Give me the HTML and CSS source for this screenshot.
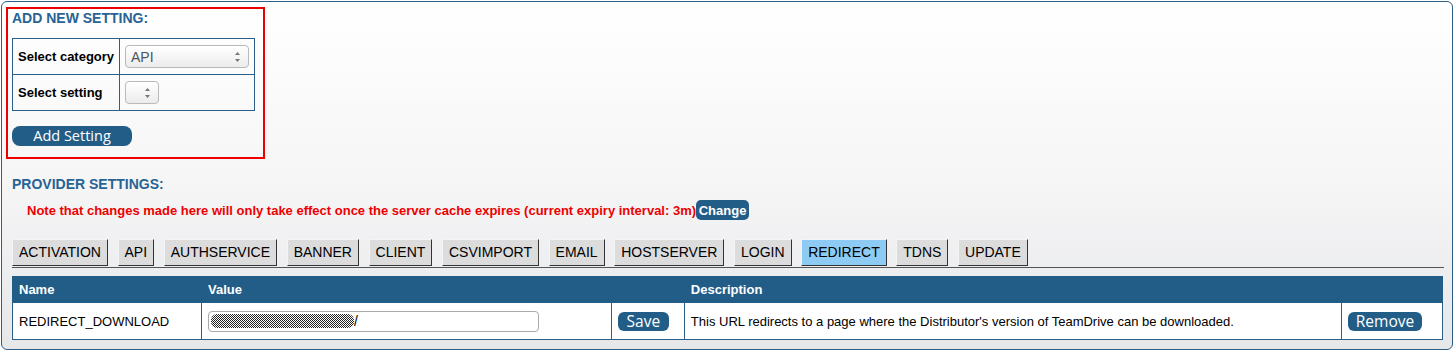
FILE: index.html
```html
<!DOCTYPE html>
<html lang="en">
<head>
  <meta charset="UTF-8" />
  <title>Provider Settings</title>
  <link rel="stylesheet" href="styles.css">
</head>
<body>

  <div class="panel">

    <div class="add-box">
      <h3 class="section-title">ADD NEW SETTING:</h3>
      <table class="select-table">
        <tr>
          <th>Select category</th>
          <td>
            <div class="select select-wide">
              <span>API</span>
              <svg class="arrows" width="7" height="12" viewBox="0 0 7 12"><path d="M3.5 1 L6 4 L1 4 Z M1 8 L6 8 L3.5 11 Z" fill="#777"/></svg>
            </div>
          </td>
        </tr>
        <tr>
          <th>Select setting</th>
          <td>
            <div class="select select-small">
              <span></span>
              <svg class="arrows" width="7" height="12" viewBox="0 0 7 12"><path d="M3.5 1 L6 4 L1 4 Z M1 8 L6 8 L3.5 11 Z" fill="#777"/></svg>
            </div>
          </td>
        </tr>
      </table>
      <button class="btn btn-add">Add Setting</button>
    </div>

    <div class="provider">
      <h3 class="section-title">PROVIDER SETTINGS:</h3>
      <p class="note">Note that changes made here will only take effect once the server cache expires (current expiry interval: 3m)<button class="btn-change">Change</button></p>

      <div class="tabs">
        <button class="tab">ACTIVATION</button>
        <button class="tab">API</button>
        <button class="tab">AUTHSERVICE</button>
        <button class="tab">BANNER</button>
        <button class="tab">CLIENT</button>
        <button class="tab">CSVIMPORT</button>
        <button class="tab">EMAIL</button>
        <button class="tab">HOSTSERVER</button>
        <button class="tab">LOGIN</button>
        <button class="tab active">REDIRECT</button>
        <button class="tab">TDNS</button>
        <button class="tab">UPDATE</button>
      </div>

      <table class="settings">
        <thead>
          <tr>
            <th class="col-name">Name</th>
            <th class="col-value">Value</th>
            <th class="col-save"></th>
            <th class="col-desc">Description</th>
            <th class="col-remove"></th>
          </tr>
        </thead>
        <tbody>
          <tr>
            <td>REDIRECT_DOWNLOAD</td>
            <td>
              <div class="text-input"><span class="scrubbed"></span><span class="slash">/</span></div>
            </td>
            <td><button class="btn btn-save">Save</button></td>
            <td>This URL redirects to a page where the Distributor's version of TeamDrive can be downloaded.</td>
            <td><button class="btn btn-remove">Remove</button></td>
          </tr>
        </tbody>
      </table>
    </div>

  </div>

</body>
</html>
```

FILE: styles.css
```css
* {
  box-sizing: border-box;
}

body {
  margin: 0;
  background: white;
  font-family: "Liberation Sans", Arial, sans-serif;
  font-size: 13px;
  color: black;
}

.panel {
  margin: 1px 3px 2px 1px;
  height: 349px;
  border: 1px solid #2b5f8a;
  border-radius: 6px;
  padding: 5px 8px 0 4px;
  background: linear-gradient(to bottom, #ffffff 0%, #f6f6f7 50%, #e6e7e9 100%);
}

.section-title {
  margin: 0;
  font-size: 14px;
  line-height: 16px;
  font-weight: bold;
  color: #276394;
}

/* add new setting box */

.add-box {
  width: 259px;
  border: 2px solid #ee0000;
  padding: 1px 4px 11px 4px;
}

.select-table {
  margin-top: 12px;
  border-collapse: collapse;
  width: 243px;
}

.select-table th,
.select-table td {
  border: 1px solid #2b5f8a;
  height: 36px;
  padding: 0 5px;
  text-align: left;
}

.select-table th {
  width: 108px;
  padding: 0 0 0 5px;
  white-space: nowrap;
  font-size: 13px;
  font-weight: bold;
}

.select {
  display: flex;
  align-items: center;
  justify-content: space-between;
  height: 23px;
  border: 1px solid #b9b9b9;
  border-radius: 4px;
  background: linear-gradient(to bottom, #ffffff, #ececec);
  padding: 0 7px 0 5px;
  font-size: 14px;
  color: #4a5560;
}

.select-wide {
  width: 124px;
}

.select-small {
  width: 34px;
}

.btn {
  background: #225d88;
  color: white;
  border: none;
  border-radius: 8px;
  font-family: "Open Sans", sans-serif;
  font-size: 14.5px;
  padding: 0;
  height: 20px;
  line-height: 20px;
  cursor: pointer;
}

.btn-add {
  display: block;
  margin-top: 15px;
  width: 120px;
}

/* provider settings */

.provider {
  padding: 17px 0 0 6px;
}

.note {
  margin: 8px 0 0 0;
  padding-left: 15px;
  display: flex;
  align-items: center;
  height: 20px;
  color: #ee0000;
  font-weight: bold;
  font-size: 13px;
}

.btn-change {
  background: #225d88;
  color: white;
  border: none;
  border-radius: 5px;
  font-family: "Liberation Sans", Arial, sans-serif;
  font-weight: bold;
  font-size: 13px;
  height: 20px;
  width: 53px;
  padding: 0;
}

.tabs {
  margin-top: 19px;
  display: flex;
  gap: 9.6px;
  border-bottom: 1px solid #555;
  padding-bottom: 1px;
}

.tab {
  font-family: "Liberation Sans", Arial, sans-serif;
  font-size: 14px;
  line-height: 17px;
  padding: 4px 6px;
  background: #dcdcdc;
  color: black;
  border: 1px solid;
  border-color: #f4f4f4 #333 #333 #f4f4f4;
  cursor: pointer;
}

.tab.active {
  background: #8ecbf4;
}

.settings {
  margin-top: 8px;
  width: 1431px;
  border-collapse: collapse;
  background: white;
}

.settings th {
  background: #225d88;
  color: white;
  font-weight: bold;
  text-align: left;
  height: 26px;
  padding: 0 6px;
  border: 1px solid #225d88;
}

.settings td {
  border: 1px solid #2b5f8a;
  height: 37px;
  padding: 0 6px;
}

.col-name { width: 189px; }
.col-value { width: 410px; }
.col-save { width: 73px; }
.col-desc { width: 658px; }
.col-remove { width: 101px; }

.text-input {
  display: flex;
  align-items: center;
  width: 331px;
  height: 21px;
  border: 1px solid #aaa;
  border-radius: 4px;
  padding-left: 2px;
  background: white;
}

.scrubbed {
  width: 143px;
  height: 14px;
  border-radius: 6px;
  background: repeating-conic-gradient(#222 0 25%, #fff 0 50%);
  background-size: 2px 2px;
}

.slash {
  font-size: 14px;
}

.btn-save,
.btn-remove {
  display: block;
  height: 19px;
  line-height: 19px;
  border-radius: 6px;
  font-size: 15.5px;
}

.btn-save {
  width: 51px;
}

.btn-remove {
  width: 74px;
}
```
